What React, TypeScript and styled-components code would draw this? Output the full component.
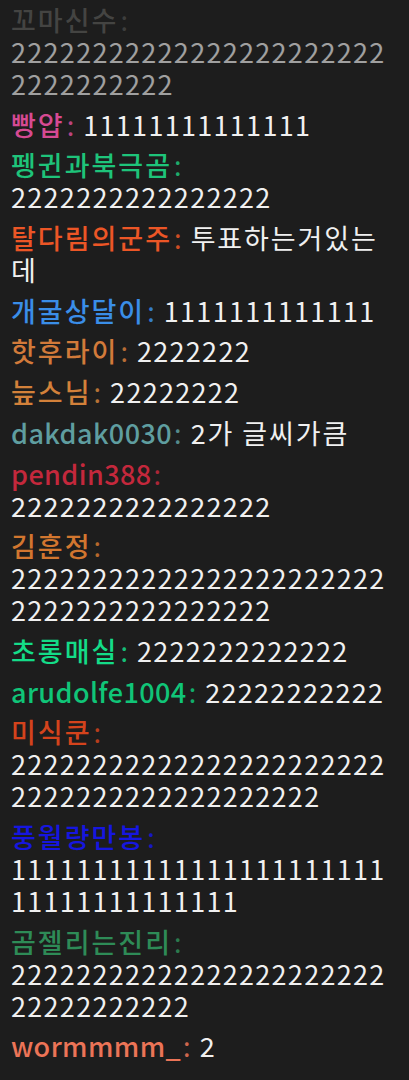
import React from "react";
import styled, { createGlobalStyle } from "styled-components";

const Global = createGlobalStyle`
  html, body { margin: 0; padding: 0; background: #1d1d1d; }
  body { font-family: "Noto Sans CJK KR", "Noto Sans", sans-serif; }
`;

const Chat = styled.div`
  width: 409px;
  height: 1080px;
  overflow: hidden;
  box-sizing: border-box;
  padding: 4px 12px 0 11px;
  background: #1d1d1d;
  display: flex;
  flex-direction: column;
  gap: 8.7px;
`;

const Line = styled.div<{ $faded?: boolean }>`
  font-size: 27px;
  line-height: 32px;
  color: #f0f0f0;
  overflow-wrap: anywhere;
  opacity: ${(p) => (p.$faded ? 0.62 : 1)};
`;

const Author = styled.span`
  white-space: nowrap;
`;

const Name = styled.span<{ $color: string; $hangul: boolean }>`
  color: ${(p) => p.$color};
  font-weight: 500;
  letter-spacing: ${(p) => (p.$hangul ? "2px" : "0.4px")};
`;

const Colon = styled.span<{ $color: string }>`
  color: ${(p) => p.$color};
  font-weight: 400;
  margin: 0 3px 0 2px;
  opacity: 0.85;
`;

const Msg = styled.span<{ $hangul: boolean }>`
  letter-spacing: ${(p) => (p.$hangul ? "1.9px" : "1.3px")};
`;

type Item = { name: string; color: string; text: string; faded?: boolean };

const d = (c: string, n: number) => c.repeat(n);

const items: Item[] = [
  { name: "꼬마신수", color: "#5c5c5a", text: d("2", 33), faded: true },
  { name: "빵얍", color: "#d64a93", text: d("1", 14) },
  { name: "펭귄과북극곰", color: "#1ec47a", text: d("2", 16) },
  { name: "탈다림의군주", color: "#ec5626", text: "투표하는거있는데" },
  { name: "개굴상달이", color: "#3a8ee8", text: d("1", 13) },
  { name: "핫후라이", color: "#d27a3a", text: d("2", 7) },
  { name: "늪스님", color: "#d3813a", text: d("2", 8) },
  { name: "dakdak0030", color: "#5f9ea0", text: "2가 글씨가큼" },
  { name: "pendin388", color: "#c4283c", text: d("2", 16) },
  { name: "김훈정", color: "#d2762f", text: d("2", 39) },
  { name: "초롱매실", color: "#14dc88", text: d("2", 13) },
  { name: "arudolfe1004", color: "#10c578", text: d("2", 11) },
  { name: "미식쿤", color: "#d4431c", text: d("2", 42) },
  { name: "풍월량만봉", color: "#1616e0", text: d("1", 37) },
  { name: "곰젤리는진리", color: "#2e8b57", text: d("2", 34) },
  { name: "wormmmm_", color: "#ec7457", text: "2" },
];

const isHangul = (s: string) => /[가-힣]/.test(s);

export default function App() {
  return (
    <>
      <Global />
      <Chat>
        {items.map((it, i) => (
          <Line key={i} $faded={it.faded}>
            <Author>
              <Name $color={it.color} $hangul={isHangul(it.name)}>
                {it.name}
              </Name>
              <Colon $color={it.color}>:</Colon>
            </Author>{" "}
            <Msg $hangul={isHangul(it.text)}>{it.text}</Msg>
          </Line>
        ))}
      </Chat>
    </>
  );
}
